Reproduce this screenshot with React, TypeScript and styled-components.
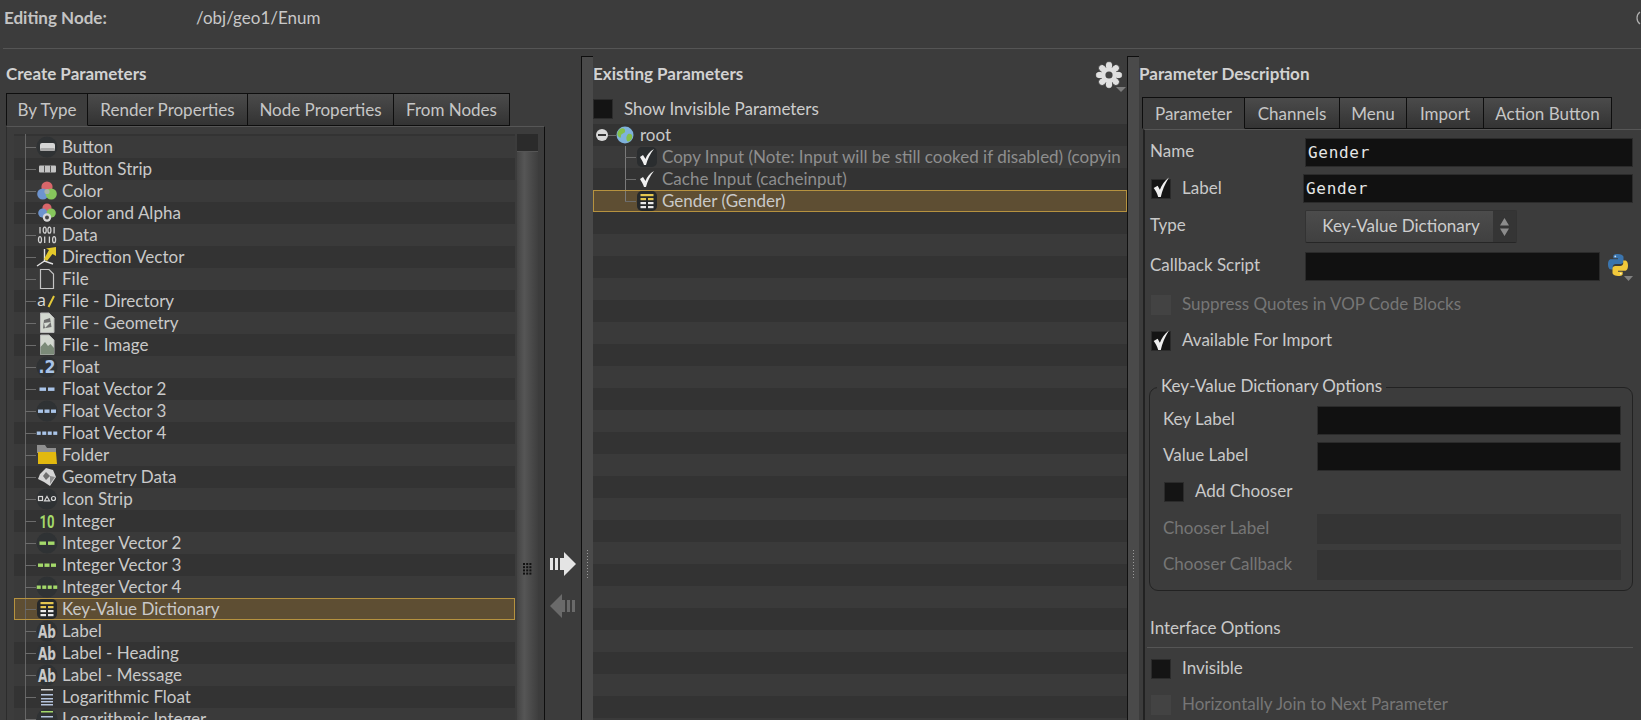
import React from "react";
import styled, { createGlobalStyle } from "styled-components";

const Global = createGlobalStyle`
  html, body { margin: 0; padding: 0; background: #3c3c3c; }
  * { box-sizing: border-box; }
`;

const Page = styled.div`
  width: 1641px; height: 720px; overflow: hidden; display: flex; flex-direction: column;
  background: #3c3c3c; color: #cdcdcd; font-family: "Lato", sans-serif; font-size: 17px;
`;
const Header = styled.header`
  height: 49px; margin-left: 3px; padding-left: 1px; display: flex; line-height: 36px;
  border-bottom: 1px solid #555; flex: none; position: relative; overflow: hidden;
`;
const HeaderLabel = styled.div` width: 192px; font-weight: 700; color: #c4c4c4; `;
const HeaderPath = styled.div` flex: 1; color: #c8c8c8; `;
const HeaderEdge = styled.svg` flex: none; width: 5px; height: 14px; margin-top: 11px; `;
const Main = styled.main` flex: 1; display: flex; margin-top: 7px; min-height: 0; `;
const Title = styled.h2`
  margin: 0; height: 36px; line-height: 36px; font-size: 17px; font-weight: 700; color: #d2d2d2;
`;
const LeftPanel = styled.section` width: 545px; flex: none; padding-left: 6px; display: flex; flex-direction: column; `;
const Tabs = styled.div<{ $mt: number }>` display: flex; margin-top: ${p => p.$mt}px; flex: none; `;
const Tab = styled.div<{ $w: number; $active?: boolean; $h?: number }>`
  width: ${p => p.$w}px; height: ${p => p.$h ?? 33}px; display: flex; align-items: center; justify-content: center;
  border: 1px solid #0e0e0e; border-left-width: ${p => (p.$active ? 1 : 0)}px;
  border-bottom-color: ${p => (p.$active ? "transparent" : "#0e0e0e")};
  background: ${p => (p.$active ? "#3d3d3d" : "linear-gradient(#4b4b4b, #333)")};
  color: #c6c6c6; padding-top: ${p => (p.$h ? 1 : 0)}px; padding-bottom: ${p => (p.$h ? 0 : 1)}px;
`;
const Box = styled.div`
  flex: 1; min-height: 0; display: flex; padding: 7px 6px 0 7px;
  border-top: 1px solid #565656; border-right: 1px solid #0e0e0e; border-left: 1px solid #2c2c2c;
`;
const ListClip = styled.div` flex: 1; overflow: hidden; min-width: 0; `;
const ListInner = styled.div` margin-top: -20px; `;
const Row = styled.div<{ $dark: boolean; $sel?: boolean }>`
  height: 22px; display: flex; align-items: center; white-space: nowrap;
  background:
    linear-gradient(#666, #666) 11px 0 / 1px 100% no-repeat,
    ${p => (p.$dark ? "#333333" : "#3a3a3a")};
  ${p => p.$sel && `
    outline: 1px solid #b6923f; outline-offset: -1px;
    background: linear-gradient(#666, #666) 11px 0 / 1px 100% no-repeat, #5e4e33;
  `}
`;
const Connector = styled.span<{ $ml: number; $w: number }>`
  flex: none; margin-left: ${p => p.$ml}px; width: ${p => p.$w}px; height: 1px; background: #6c6c6c;
`;
const IconBox = styled.svg` flex: none; width: 22px; height: 22px; margin-right: 4px; overflow: visible; `;
const RowText = styled.span<{ $dim?: boolean }>` color: ${p => (p.$dim ? "#8e8e8e" : "#c9c9c9")}; margin-top: -1px; `;
const Scroll = styled.div`
  flex: none; width: 21px; margin-left: 2px; position: relative; display: flex; flex-direction: column;
`;
const ScrollCap = styled.div` height: 18px; background: #2b2b2b; border-bottom: 1px solid #555; flex: none; `;
const ScrollTrack = styled.div` flex: 1; background: linear-gradient(90deg, #444, #565656 35%, #474747 75%, #3e3e3e); `;
const ScrollGrip = styled.svg` position: absolute; left: 6px; top: 429px; width: 9px; height: 12px; `;
const Middle = styled.div`
  width: 37px; flex: none; display: flex; flex-direction: column; align-items: center; padding-top: 496px; gap: 18px;
  border-right: 1.5px solid #0e0e0e;
`;
const Splitter = styled.div`
  width: 11px; flex: none; background: #4a4a4a; border-top: 1px solid #0e0e0e; display: flex; justify-content: center; padding-top: 493px;
`;
const SplitDots = styled.div` width: 1px; height: 30px; background: repeating-linear-gradient(#9a9a9a 0 1px, transparent 1px 3px); `;
const CenterPanel = styled.section` width: 535px; flex: none; display: flex; flex-direction: column; border-right: 1px solid #111; `;
const TitleRow = styled.div` display: flex; justify-content: space-between; flex: none; `;
const Gear = styled.svg` width: 32px; height: 32px; margin-top: 5px; flex: none; `;
const ShowRow = styled.div` display: flex; align-items: center; height: 20px; margin-top: 6px; flex: none; gap: 11px; `;
const ShowText = styled.span` margin-top: -2px; `;
const Tree = styled.div` margin-top: 5px; flex: 1; overflow: hidden; `;
const TreeRow = styled.div<{ $dark: boolean; $line?: "full" | "half"; $sel?: boolean }>`
  height: 22px; display: flex; align-items: center; white-space: nowrap; overflow: hidden;
  background: ${p => (p.$sel ? "#5e4e33" : p.$dark ? "#333333" : "#3a3a3a")};
  ${p => p.$line && `background-image: linear-gradient(#7a7a7a, #7a7a7a); background-repeat: no-repeat; background-position: 32px 0; background-size: 1px ${p.$line === "full" ? "100%" : "50%"};`}
  ${p => p.$sel && `outline: 1px solid #b6923f; outline-offset: -1px;`}
`;
const Minus = styled.span`
  flex: none; margin-left: 3px; width: 12px; height: 12px; border-radius: 50%; background: #d8d8d8; display: flex; align-items: center; justify-content: center;
  &::after { content: ""; width: 8px; height: 2px; background: #333; }
`;
const Globe = styled.svg` flex: none; width: 18px; height: 18px; margin-right: 6px; `;
const RightPanel = styled.section` flex: 1; min-width: 0; display: flex; flex-direction: column; `;
const RightTabs = styled(Tabs)` margin-left: 3px; `;
const Form = styled.div`
  flex: 1; border-left: 2px solid #222; border-top: 1px solid #565656; margin-left: 4px; padding: 0 8px 0 5px;
  display: flex; flex-direction: column;
`;
const FormRow = styled.div<{ $mt: number; $h: number; $cl?: number }>`
  display: flex; align-items: center; flex: none; margin-top: ${p => p.$mt}px; height: ${p => p.$h}px; padding-left: ${p => p.$cl ?? 0}px;
`;
const FieldLabel = styled.label<{ $w: number; $dim?: boolean }>`
  flex: none; width: ${p => p.$w}px; color: ${p => (p.$dim ? "#767676" : "#c9c9c9")}; white-space: nowrap; margin-top: -4px;
`;
const Input = styled.div<{ $disabled?: boolean }>`
  flex: 1; height: 100%; display: flex; align-items: center; padding-left: 2px;
  background: ${p => (p.$disabled ? "#343434" : "#111")};
  border: 1px solid ${p => (p.$disabled ? "#343434" : "#2b2b2b")};
  color: #e6e6e6; font-family: "DejaVu Sans Mono", monospace; font-size: 16px; letter-spacing: .7px;
`;
const Check = styled.span<{ $off?: boolean }>`
  flex: none; width: 20px; height: 20px; display: flex; align-items: center; justify-content: center;
  background: ${p => (p.$off ? "#434343" : "#141414")}; border: 1px solid ${p => (p.$off ? "#434343" : "#2b2b2b")};
`;
const CheckLabel = styled.span<{ $dim?: boolean }>`
  margin-left: 11px; color: ${p => (p.$dim ? "#767676" : "#c9c9c9")}; white-space: nowrap; margin-top: -3px;
`;
const LabelCell = styled.div` flex: none; width: 152px; display: flex; align-items: center; `;
const Select = styled.div`
  width: 212px; height: 100%; display: flex; background: linear-gradient(#4c4c4c, #404040);
  border: 1px solid #333; border-bottom-color: #262626; border-radius: 2px;
`;
const SelectText = styled.div` flex: 1; display: flex; align-items: center; justify-content: center; color: #cdcdcd; padding: 0 0 2px 3px; `;
const SelectArrows = styled.div` width: 23px; flex: none; background: #353535; display: flex; align-items: center; justify-content: center; `;
const PyIcon = styled.svg` flex: none; width: 28px; height: 30px; margin-left: 5px; `;
const Group = styled.div`
  position: relative; flex: none; margin-top: 36px; margin-left: -1px; height: 204px; width: 484px;
  border: 1px solid #222; border-radius: 9px; padding: 18px 11px 0 13px;
`;
const Legend = styled.div`
  position: absolute; left: 7px; top: -12px; padding: 0 4px; background: #3c3c3c; color: #cdcdcd; line-height: 20px;
`;
const Divider = styled.div` flex: none; height: 1px; background: #555; margin: 8px 0 0 -3px; `;
const PlainLabel = styled.div` flex: none; height: 20px; line-height: 20px; margin-top: 27px; margin-bottom: 1px; color: #c9c9c9; `;
const TickMark = styled.svg` flex: none; width: 18px; height: 21px; margin-top: -2px; overflow: visible; `;

const Tick = () => (
  <TickMark viewBox="0 0 16 18">
    <path d="M1.5 9.5 L5 7.5 L7 11 C8.5 7 11 3 15 0 C11.5 6 9 11.5 7.8 17.5 L5.5 17.5 C4.5 14 3.2 12 1.5 9.5 Z" fill="#eeeeee" />
  </TickMark>
);
const Halo = () => <circle cx="11" cy="11" r="10.5" fill="#2f3234" />;
const bars = (n: number, w: number, gap: number, c: string, y = 9.5, h = 3.4) => {
  const tot = n * w + (n - 1) * gap;
  const s = 11 - tot / 2;
  return Array.from({ length: n }, (_, i) => <rect key={i} x={s + i * (w + gap)} y={y} width={w} height={h} fill={c} />);
};
const Kv = () => (
  <>
    <rect x="1" y="1" width="20" height="20" rx="5" fill="#25282a" />
    <rect x="4.5" y="4" width="13" height="2.2" fill="#e3c64f" />
    <rect x="4.5" y="8" width="5.5" height="2.2" fill="#e3c64f" /><rect x="12" y="8" width="5.5" height="2.2" fill="#e3c64f" />
    <rect x="4.5" y="12" width="5.5" height="2.2" fill="#e8e8e8" /><rect x="12" y="12" width="5.5" height="2.2" fill="#e8e8e8" />
    <rect x="4.5" y="16" width="5.5" height="2.2" fill="#e8e8e8" /><rect x="12" y="16" width="5.5" height="2.2" fill="#e8e8e8" />
  </>
);
const Ab = () => (
  <>
    <Halo />
    <text x="11" y="17.5" textAnchor="middle" fontFamily="DejaVu Sans" fontWeight="700" fontSize="17" fill="#c9c9c9" textLength="18" lengthAdjust="spacingAndGlyphs">Ab</text>
  </>
);
const Doc = ({ children }: { children?: React.ReactNode }) => (
  <>
    <path d="M4.5 1 H13 L18 6 V20.5 H4.5 Z" fill="#d3d8d0" stroke="#b9b9b9" strokeWidth="1" />
    {children}
  </>
);
const Logs = ({ top }: { top: string }) => (
  <>
    <rect x="5" y="3" width="12" height="1.5" fill={top} />
    <rect x="5" y="8" width="12" height="1.5" fill="#b5c4dd" />
    <rect x="5" y="12" width="12" height="1.5" fill="#b5c4dd" />
    <rect x="5" y="15" width="12" height="1.5" fill="#b5c4dd" />
    <rect x="5" y="18" width="12" height="1.5" fill="#b5c4dd" />
  </>
);
const digits = (y: number, pattern: string) =>
  pattern.split("").map((d, i) =>
    d === "1"
      ? <path key={i} d={`M${4 + i * 4.7} ${y}v6.4`} />
      : <ellipse key={i} cx={4 + i * 4.7} cy={y + 3.2} rx="1.5" ry="3" />
  );

const icons: Record<string, React.ReactNode> = {
  button: (<><Halo /><rect x="4" y="7" width="15" height="8" rx="2" fill="#d6d6d6" /><rect x="4" y="12" width="15" height="3" rx="1.5" fill="#a8a8a8" /></>),
  strip: (<><rect x="3" y="7.5" width="17" height="7" rx="1" fill="#c4c4c4" /><rect x="8" y="7.5" width="1" height="7" fill="#555" /><rect x="14" y="7.5" width="1" height="7" fill="#555" /></>),
  color: (<><circle cx="11" cy="7" r="5.6" fill="#d9666a" /><circle cx="6.8" cy="14" r="5.6" fill="#6d94cf" /><circle cx="15.2" cy="14" r="5.6" fill="#86c65c" /><circle cx="11" cy="11.5" r="2.6" fill="#a8b6a8" /></>),
  alpha: (<><circle cx="11" cy="6" r="4.6" fill="#d9666a" /><circle cx="6.8" cy="11" r="4.6" fill="#6d94cf" /><circle cx="15.2" cy="11" r="4.6" fill="#86c65c" /><circle cx="11" cy="15.5" r="4.2" fill="#d8d8d8" /><circle cx="11" cy="15.5" r="2" fill="#444" /></>),
  data: (<g stroke="#d2d2d2" strokeWidth="1.3" fill="none">{digits(3, "1001")}{digits(12.5, "0110")}</g>),
  dir: (<><path d="M1 20 L8.5 15 L17 18" stroke="#e2e2e2" strokeWidth="1.4" fill="none" /><path d="M8.5 3 V15" stroke="#e2e2e2" strokeWidth="1.4" /><path d="M8 13 L13 4 L10 2.5 L20 1 L20 10 L16.5 8 L11 15 Z" fill="#e4c92b" /></>),
  file: <path d="M4.5 1.5 H13 L17.5 6 V20.5 H4.5 Z" fill="none" stroke="#c4c4c4" strokeWidth="1.2" />,
  dirf: (<><text x="1" y="16" fontFamily="Noto Sans" fontSize="16" fill="#d6d6d6">a</text><path d="M12.5 17 L18 6" stroke="#e4c93a" strokeWidth="2" /></>),
  geom: <Doc><path d="M8 8 L14 6 L15.5 15 L7 16.5 Z" fill="#6f6f6f" /><path d="M9 16 L15 10 L8 11 Z" fill="#d6dbd4" /></Doc>,
  image: <Doc><path d="M4.5 20.5 V13 L9 8 L12 12 L14.5 10 L18 14 V20.5 Z" fill="#7b8a78" /></Doc>,
  float: (<><Halo /><text x="11" y="17" textAnchor="middle" fontFamily="DejaVu Sans" fontWeight="700" fontSize="17" fill="#a9c4e8" textLength="17" lengthAdjust="spacingAndGlyphs">.2</text></>),
  fv2: bars(2, 6.5, 2, "#a9c4e8"),
  fv3: (<><Halo />{bars(3, 5, 1.5, "#a9c4e8")}</>),
  fv4: bars(4, 4, 1.5, "#a9c4e8"),
  folder: (<><path d="M1 1 H9 L11 4 H20 V9 H1 Z" fill="#8f8f8f" /><path d="M2 8 H20 L21 20 H2 Z" fill="#e2b90f" /></>),
  geo: (<g><path d="M4 8 L10 2 L17 4 L20 11 L14 20 L8 16 L2 13 Z" fill="#d5d5d5" /><path d="M10 6 L14 10 L10 14 L7 10 Z" fill="#6f6f6f" /><path d="M14 10 L19 11 L14 18 Z" fill="#8d8d8d" /></g>),
  istrip: (<><Halo /><rect x="2.5" y="8.5" width="4" height="4" fill="none" stroke="#d8d8d8" strokeWidth="1.2" /><path d="M11 8.5 L13.5 12.8 H8.5 Z" fill="none" stroke="#d8d8d8" strokeWidth="1.2" /><circle cx="17.5" cy="10.5" r="2" fill="none" stroke="#d8d8d8" strokeWidth="1.2" /></>),
  int: <text x="11" y="18" textAnchor="middle" fontFamily="Roboto" fontWeight="700" fontSize="18" fill="#a4d96a" textLength="15" lengthAdjust="spacingAndGlyphs">10</text>,
  iv2: (<><Halo />{bars(2, 6.5, 2, "#a4d96a")}</>),
  iv3: bars(3, 5, 1.5, "#a4d96a"),
  iv4: (<><Halo />{bars(4, 4, 1.5, "#a4d96a")}</>),
  kv: <Kv />,
  ab: <Ab />,
  logf: <Logs top="#d5d5d5" />,
  logi: (<><Halo /><Logs top="#a4d96a" /></>),
  tick: (<><path d="M4 11 L7 9 L9.5 13 C11 9 13.5 5.5 18 3 C14 8 11.5 13 10 19 L8 19 C7 16 5.5 13.5 4 11 Z" fill="#f0f0f0" /></>),
  tickh: (<><rect x="1" y="1" width="20" height="20" rx="5" fill="#2a2d2f" /><path d="M4 11 L7 9 L9.5 13 C11 9 13.5 5.5 18 3 C14 8 11.5 13 10 19 L8 19 C7 16 5.5 13.5 4 11 Z" fill="#f0f0f0" /></>),
};

const leftRows: [string, string][] = [
  ["Angle", ""], ["Button", "button"], ["Button Strip", "strip"], ["Color", "color"], ["Color and Alpha", "alpha"], ["Data", "data"],
  ["Direction Vector", "dir"], ["File", "file"], ["File - Directory", "dirf"], ["File - Geometry", "geom"], ["File - Image", "image"],
  ["Float", "float"], ["Float Vector 2", "fv2"], ["Float Vector 3", "fv3"], ["Float Vector 4", "fv4"], ["Folder", "folder"],
  ["Geometry Data", "geo"], ["Icon Strip", "istrip"], ["Integer", "int"], ["Integer Vector 2", "iv2"], ["Integer Vector 3", "iv3"],
  ["Integer Vector 4", "iv4"], ["Key-Value Dictionary", "kv"], ["Label", "ab"], ["Label - Heading", "ab"], ["Label - Message", "ab"],
  ["Logarithmic Float", "logf"], ["Logarithmic Integer", "logi"],
];

const ParamIcon = ({ name }: { name: string }) => <IconBox viewBox="0 0 22 22">{icons[name]}</IconBox>;

const GearIcon = () => (
  <Gear viewBox="0 0 32 32">
    <g fill="#e0e0e0" stroke="#222" strokeWidth=".6">
      {[0, 45, 90, 135, 180, 225, 270, 315].map(a => (
        <ellipse key={a} cx="14" cy="5" rx="3.6" ry="4.4" transform={`rotate(${a} 14 14)`} />
      ))}
    </g>
    <circle cx="14" cy="14" r="8" fill="#e0e0e0" />
    <circle cx="14" cy="14" r="3.6" fill="#444" />
    <path d="M21 26 H31 L26 31 Z" fill="#7d7d7d" />
  </Gear>
);

const Dots = () => (
  <ScrollGrip viewBox="0 0 9 12">
    {[0, 1, 2, 3].flatMap(r => [0, 1, 2].map(c => <rect key={`${r}${c}`} x={c * 3.2} y={r * 3.2} width="2" height="2" fill="#111" />))}
  </ScrollGrip>
);

const ArrowRight = () => (
  <svg width="26" height="24" viewBox="0 0 26 24">
    <rect x="0" y="6" width="3" height="12" fill="#e4e4e4" /><rect x="5" y="6" width="3" height="12" fill="#e4e4e4" /><rect x="10" y="6" width="4" height="12" fill="#e4e4e4" />
    <path d="M14 6 V0 L26 12 L14 24 V18 Z" fill="#e4e4e4" />
  </svg>
);
const ArrowLeft = () => (
  <svg width="26" height="24" viewBox="0 0 26 24">
    <path d="M12 6 V0 L0 12 L12 24 V18 Z" fill="#6a6a6a" />
    <rect x="12" y="6" width="3" height="12" fill="#6a6a6a" /><rect x="17" y="6" width="3" height="12" fill="#6a6a6a" /><rect x="22" y="6" width="3" height="12" fill="#6a6a6a" />
  </svg>
);

const Python = () => (
  <PyIcon viewBox="0 0 28 30">
    <path d="M12.9 2C8 2 8.3 4.1 8.3 4.1V6.3H13v.9H6.4S3 6.8 3 12.2s3 5.2 3 5.2h1.8v-2.5s-.1-3 2.9-3h5s2.8 0 2.8-2.7V4.8S18 2 12.9 2z" fill="#3b75ae" />
    <circle cx="10.3" cy="4.4" r=".9" fill="#cfe0ee" />
    <path d="M13.1 24C18 24 17.7 21.9 17.7 21.9V19.7H13v-.9h6.6s3.4.4 3.4-5-3-5.2-3-5.2h-1.8v2.5s.1 3-2.9 3h-5s-2.8 0-2.8 2.7v4.2S8 24 13.1 24z" fill="#f2c93b" />
    <circle cx="15.7" cy="21.6" r=".9" fill="#fff3c4" />
    <path d="M19 24 H28 L23.5 29 Z" fill="#808080" />
  </PyIcon>
);

export default function App() {
  return (
    <Page>
      <Global />
      <Header>
        <HeaderLabel>Editing Node:</HeaderLabel>
        <HeaderPath>/obj/geo1/Enum</HeaderPath>
        <HeaderEdge viewBox="0 0 5 14"><path d="M4 1 C0 4 0 10 4 13" fill="none" stroke="#b0b0b0" strokeWidth="1.2" /></HeaderEdge>
      </Header>
      <Main>
        <LeftPanel>
          <Title>Create Parameters</Title>
          <Tabs $mt={1}>
            <Tab $w={82} $active>By Type</Tab>
            <Tab $w={160}>Render Properties</Tab>
            <Tab $w={146}>Node Properties</Tab>
            <Tab $w={116}>From Nodes</Tab>
          </Tabs>
          <Box>
            <ListClip>
              <ListInner>
                {leftRows.map(([label, icon], i) => (
                  <Row key={label} $dark={i % 2 === 0} $sel={label === "Key-Value Dictionary"}>
                    <Connector $ml={11} $w={11} />
                    {icon ? <ParamIcon name={icon} /> : <IconBox viewBox="0 0 22 22" />}
                    <RowText>{label}</RowText>
                  </Row>
                ))}
              </ListInner>
            </ListClip>
            <Scroll>
              <ScrollCap />
              <ScrollTrack />
              <Dots />
            </Scroll>
          </Box>
        </LeftPanel>
        <Middle>
          <ArrowRight />
          <ArrowLeft />
        </Middle>
        <Splitter><SplitDots /></Splitter>
        <CenterPanel>
          <TitleRow>
            <Title>Existing Parameters</Title>
            <GearIcon />
          </TitleRow>
          <ShowRow>
            <Check />
            <ShowText>Show Invisible Parameters</ShowText>
          </ShowRow>
          <Tree>
            <TreeRow $dark>
              <Minus />
              <Connector $ml={0} $w={8} />
              <Globe viewBox="0 0 18 18">
                <circle cx="9" cy="9" r="8.5" fill="#7fb2dc" />
                <path d="M4 3 C7 1 10 3 9 6 C8 8 5 7 5 10 C5 13 3 12 1.5 9 C1 7 2 5 4 3 Z" fill="#84c04a" />
                <path d="M12 8 C15 7 17 9 16 12 C15 15 12 16 11 15 C10 13 10 10 12 8 Z" fill="#84c04a" />
              </Globe>
              <RowText>root</RowText>
            </TreeRow>
            <TreeRow $dark={false} $line="full">
              <Connector $ml={32} $w={11} />
              <ParamIcon name="tickh" />
              <RowText $dim>Copy Input (Note: Input will be still cooked if disabled) (copyin</RowText>
            </TreeRow>
            <TreeRow $dark $line="full">
              <Connector $ml={32} $w={11} />
              <ParamIcon name="tick" />
              <RowText $dim>Cache Input (cacheinput)</RowText>
            </TreeRow>
            <TreeRow $dark={false} $sel $line="half">
              <Connector $ml={32} $w={11} />
              <ParamIcon name="kv" />
              <RowText>Gender (Gender)</RowText>
            </TreeRow>
            {Array.from({ length: 24 }, (_, i) => <TreeRow key={i} $dark={i % 2 === 0} />)}
          </Tree>
        </CenterPanel>
        <Splitter><SplitDots /></Splitter>
        <RightPanel>
          <Title>Parameter Description</Title>
          <RightTabs $mt={5}>
            <Tab $w={103} $h={32} $active>Parameter</Tab>
            <Tab $w={95} $h={32}>Channels</Tab>
            <Tab $w={67} $h={32}>Menu</Tab>
            <Tab $w={77} $h={32}>Import</Tab>
            <Tab $w={128} $h={32}>Action Button</Tab>
          </RightTabs>
          <Form>
            <FormRow $mt={8} $h={29}><FieldLabel $w={155}>Name</FieldLabel><Input>Gender</Input></FormRow>
            <FormRow $mt={7} $h={29} $cl={1}>
              <LabelCell><Check><Tick /></Check><CheckLabel>Label</CheckLabel></LabelCell>
              <Input>Gender</Input>
            </FormRow>
            <FormRow $mt={7} $h={33}>
              <FieldLabel $w={155}>Type</FieldLabel>
              <Select>
                <SelectText>Key-Value Dictionary</SelectText>
                <SelectArrows>
                  <svg width="9" height="18" viewBox="0 0 9 18"><path d="M4.5 0 L9 7.5 H0 Z M4.5 18 L9 10.5 H0 Z" fill="#8c8c8c" /></svg>
                </SelectArrows>
              </Select>
            </FormRow>
            <FormRow $mt={9} $h={29}>
              <FieldLabel $w={155}>Callback Script</FieldLabel>
              <Input />
              <Python />
            </FormRow>
            <FormRow $mt={14} $h={20} $cl={1}><Check $off /><CheckLabel $dim>Suppress Quotes in VOP Code Blocks</CheckLabel></FormRow>
            <FormRow $mt={16} $h={20} $cl={1}><Check><Tick /></Check><CheckLabel>Available For Import</CheckLabel></FormRow>
            <Group>
              <Legend>Key-Value Dictionary Options</Legend>
              <FormRow $mt={0} $h={29}><FieldLabel $w={154}>Key Label</FieldLabel><Input /></FormRow>
              <FormRow $mt={7} $h={29}><FieldLabel $w={154}>Value Label</FieldLabel><Input /></FormRow>
              <FormRow $mt={11} $h={20} $cl={1}><Check /><CheckLabel>Add Chooser</CheckLabel></FormRow>
              <FormRow $mt={12} $h={30}><FieldLabel $w={154} $dim>Chooser Label</FieldLabel><Input $disabled /></FormRow>
              <FormRow $mt={6} $h={30}><FieldLabel $w={154} $dim>Chooser Callback</FieldLabel><Input $disabled /></FormRow>
            </Group>
            <PlainLabel>Interface Options</PlainLabel>
            <Divider />
            <FormRow $mt={11} $h={20} $cl={1}><Check /><CheckLabel>Invisible</CheckLabel></FormRow>
            <FormRow $mt={16} $h={20} $cl={1}><Check $off /><CheckLabel $dim>Horizontally Join to Next Parameter</CheckLabel></FormRow>
          </Form>
        </RightPanel>
      </Main>
    </Page>
  );
}
